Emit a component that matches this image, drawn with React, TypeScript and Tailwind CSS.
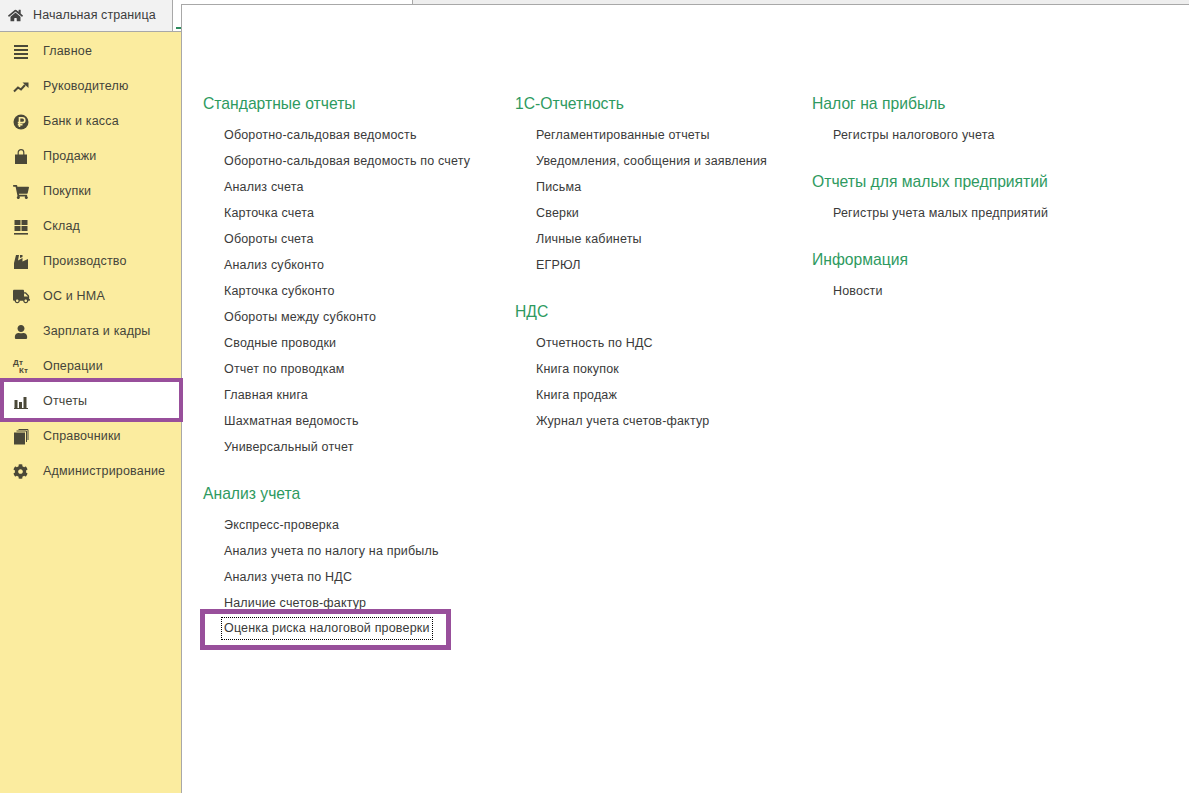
import { ReactNode } from 'react';
import { FaCog, FaHome, FaShoppingCart, FaTruck, FaUser } from 'react-icons/fa';

const ink = '#4a4838';

function Box({ children }: { children: ReactNode }) {
  return (
    <svg viewBox="0 0 16 16" className="w-4 h-4" fill={ink}>
      {children}
    </svg>
  );
}

const icons: Record<string, ReactNode> = {
  menu: (
    <Box>
      <rect x="1" y="1" width="14" height="2" />
      <rect x="1" y="5" width="14" height="2" />
      <rect x="1" y="9" width="14" height="2" />
      <rect x="1" y="13" width="14" height="2" />
    </Box>
  ),
  trend: (
    <Box>
      <path d="M1 12.5 5 8.5 8 10.5 12 6" fill="none" stroke={ink} strokeWidth="2" />
      <path d="M9.5 3.5H15.5V9Z" />
    </Box>
  ),
  ruble: (
    <Box>
      <circle cx="8" cy="8" r="7.5" />
      <path d="M6.5 13V3.8H9.4A2.4 2.4 0 0 1 9.4 8.6H4.8M4.8 10.8H9.5" fill="none" stroke="#fbec9f" strokeWidth="1.6" />
    </Box>
  ),
  bag: (
    <Box>
      <path d="M2 5.5H14V15H2Z" />
      <path d="M5.2 8V3.5A2.8 2.8 0 0 1 10.8 3.5V8" fill="none" stroke={ink} strokeWidth="1.2" />
    </Box>
  ),
  cart: <FaShoppingCart className="w-4 h-4" color={ink} />,
  store: (
    <Box>
      <rect x="1.5" y="1" width="6" height="5" />
      <rect x="8.5" y="1" width="6" height="5" />
      <rect x="1.5" y="7" width="6" height="5" />
      <rect x="8.5" y="7" width="6" height="5" />
      <rect x="1" y="14" width="14" height="1.6" />
    </Box>
  ),
  factory: (
    <Box>
      <path d="M1 15V9L3 1H6L5 6.5 9.5 4V7.5L15 5V15Z" />
      <path d="M7 1H9.5V3L7 4Z" />
    </Box>
  ),
  truck: <FaTruck className="w-[17px] h-[17px]" color={ink} />,
  user: <FaUser className="w-[14px] h-[14px] ml-px" color={ink} />,
  dtkt: (
    <div className="w-4 text-[8px] leading-[7.5px] font-bold" style={{ color: ink }}>
      <div>Дт</div>
      <div className="pl-[6px]">Кт</div>
    </div>
  ),
  bars: (
    <Box>
      <rect x="1.5" y="6" width="3" height="8" />
      <rect x="6" y="8" width="3" height="6" />
      <rect x="10.5" y="3" width="3" height="11" />
      <rect x="1" y="14" width="14" height="1" />
    </Box>
  ),
  books: (
    <Box>
      <rect x="1" y="3.5" width="11" height="12" />
      <path d="M3.5 2H13.5V13M5.5 0.5H15V11" fill="none" stroke={ink} strokeWidth="1" />
    </Box>
  ),
  gear: <FaCog className="w-[15px] h-[15px]" color={ink} />,
};

const menu = [
  ['menu', 'Главное'],
  ['trend', 'Руководителю'],
  ['ruble', 'Банк и касса'],
  ['bag', 'Продажи'],
  ['cart', 'Покупки'],
  ['store', 'Склад'],
  ['factory', 'Производство'],
  ['truck', 'ОС и НМА'],
  ['user', 'Зарплата и кадры'],
  ['dtkt', 'Операции'],
  ['bars', 'Отчеты'],
  ['books', 'Справочники'],
  ['gear', 'Администрирование'],
];

const columns = [
  {
    className: 'w-[312px]',
    groups: [
      {
        title: 'Стандартные отчеты',
        items: [
          'Оборотно-сальдовая ведомость',
          'Оборотно-сальдовая ведомость по счету',
          'Анализ счета',
          'Карточка счета',
          'Обороты счета',
          'Анализ субконто',
          'Карточка субконто',
          'Обороты между субконто',
          'Сводные проводки',
          'Отчет по проводкам',
          'Главная книга',
          'Шахматная ведомость',
          'Универсальный отчет',
        ],
      },
      {
        title: 'Анализ учета',
        items: [
          'Экспресс-проверка',
          'Анализ учета по налогу на прибыль',
          'Анализ учета по НДС',
          'Наличие счетов-фактур',
          'Оценка риска налоговой проверки',
        ],
      },
    ],
  },
  {
    className: 'w-[297px]',
    groups: [
      {
        title: '1С-Отчетность',
        items: [
          'Регламентированные отчеты',
          'Уведомления, сообщения и заявления',
          'Письма',
          'Сверки',
          'Личные кабинеты',
          'ЕГРЮЛ',
        ],
      },
      {
        title: 'НДС',
        items: [
          'Отчетность по НДС',
          'Книга покупок',
          'Книга продаж',
          'Журнал учета счетов-фактур',
        ],
      },
    ],
  },
  {
    className: 'w-[300px]',
    groups: [
      { title: 'Налог на прибыль', items: ['Регистры налогового учета'] },
      { title: 'Отчеты для малых предприятий', items: ['Регистры учета малых предприятий'] },
      { title: 'Информация', items: ['Новости'] },
    ],
  },
];

export default function App() {
  return (
    <div className="flex h-[793px] w-[1189px] overflow-hidden bg-white font-['Liberation_Sans',Arial,sans-serif]">
      <div className="flex w-[181px] shrink-0 flex-col">
        <div className="flex h-[32px] shrink-0 border-b border-[#a8a8a8] bg-white">
          <div className="flex w-[173px] items-center gap-[10px] border-r border-[#a8a8a8] bg-[#f2f2f2] pb-px pl-[8px] text-[12.5px] tracking-[0.1px] text-[#3c3c3c]">
            <FaHome className="h-[15px] w-[15px]" color="#444" />
            <span>Начальная страница</span>
          </div>
          <div className="flex flex-1 items-end pb-[2px] pl-[3px]">
            <div className="h-[2px] flex-1 bg-[#2e8b5e]" />
          </div>
        </div>
        <div className="flex-1 bg-[#fbec9f] pt-[2px]">
          {menu.map(([icon, label]) => (
            <div key={label} className="relative flex h-[35px] items-center text-[12.5px] tracking-[0.18px] text-[#44443a]">
              {label === 'Отчеты' && (
                <div className="absolute -right-[2px] left-0 top-[-6px] h-[44px] border-[4px] border-[#984f9b] bg-white" />
              )}
              <div className="relative flex w-[43px] justify-start pl-[13px]">{icons[icon]}</div>
              <span className="relative">{label}</span>
            </div>
          ))}
        </div>
      </div>

      <div className="flex min-w-0 flex-1 flex-col">
        <div className="flex h-[4px] shrink-0">
          <div className="w-[231px]" />
          <div className="flex-1 border-l border-[#a8a8a8] bg-[#eeeeee]" />
        </div>
        <div className="flex flex-1 border-l border-t border-[#a8a8a8] pl-[21px] pt-[89px]">
          {columns.map((col) => (
            <div key={col.groups[0].title} className={col.className}>
              {col.groups.map((group, g) => (
                <div key={group.title} className={g > 0 ? 'mt-[24px]' : ''}>
                  <h2 className="mb-[8px] h-[20px] text-[15.7px] leading-[20px] text-[#2e9a5f]">{group.title}</h2>
                  {group.items.map((item) => {
                    const focused = item === 'Оценка риска налоговой проверки';
                    return (
                      <div key={item} className="relative h-[26px] pl-[21px] text-[12.5px] leading-[26px] tracking-[0.18px] text-[#3a3a3a]">
                        {focused && (
                          <div className="absolute left-[-3px] top-[-7px] h-[41px] w-[251px] border-[5px] border-[#984f9b]" />
                        )}
                        <span
                          className={
                            focused
                              ? 'relative -ml-[2px] inline-block px-[2px] align-top leading-[21px] mt-[2px] outline-1 outline-dotted outline-black'
                              : ''
                          }
                        >
                          {item}
                        </span>
                      </div>
                    );
                  })}
                </div>
              ))}
            </div>
          ))}
        </div>
      </div>
    </div>
  );
}
